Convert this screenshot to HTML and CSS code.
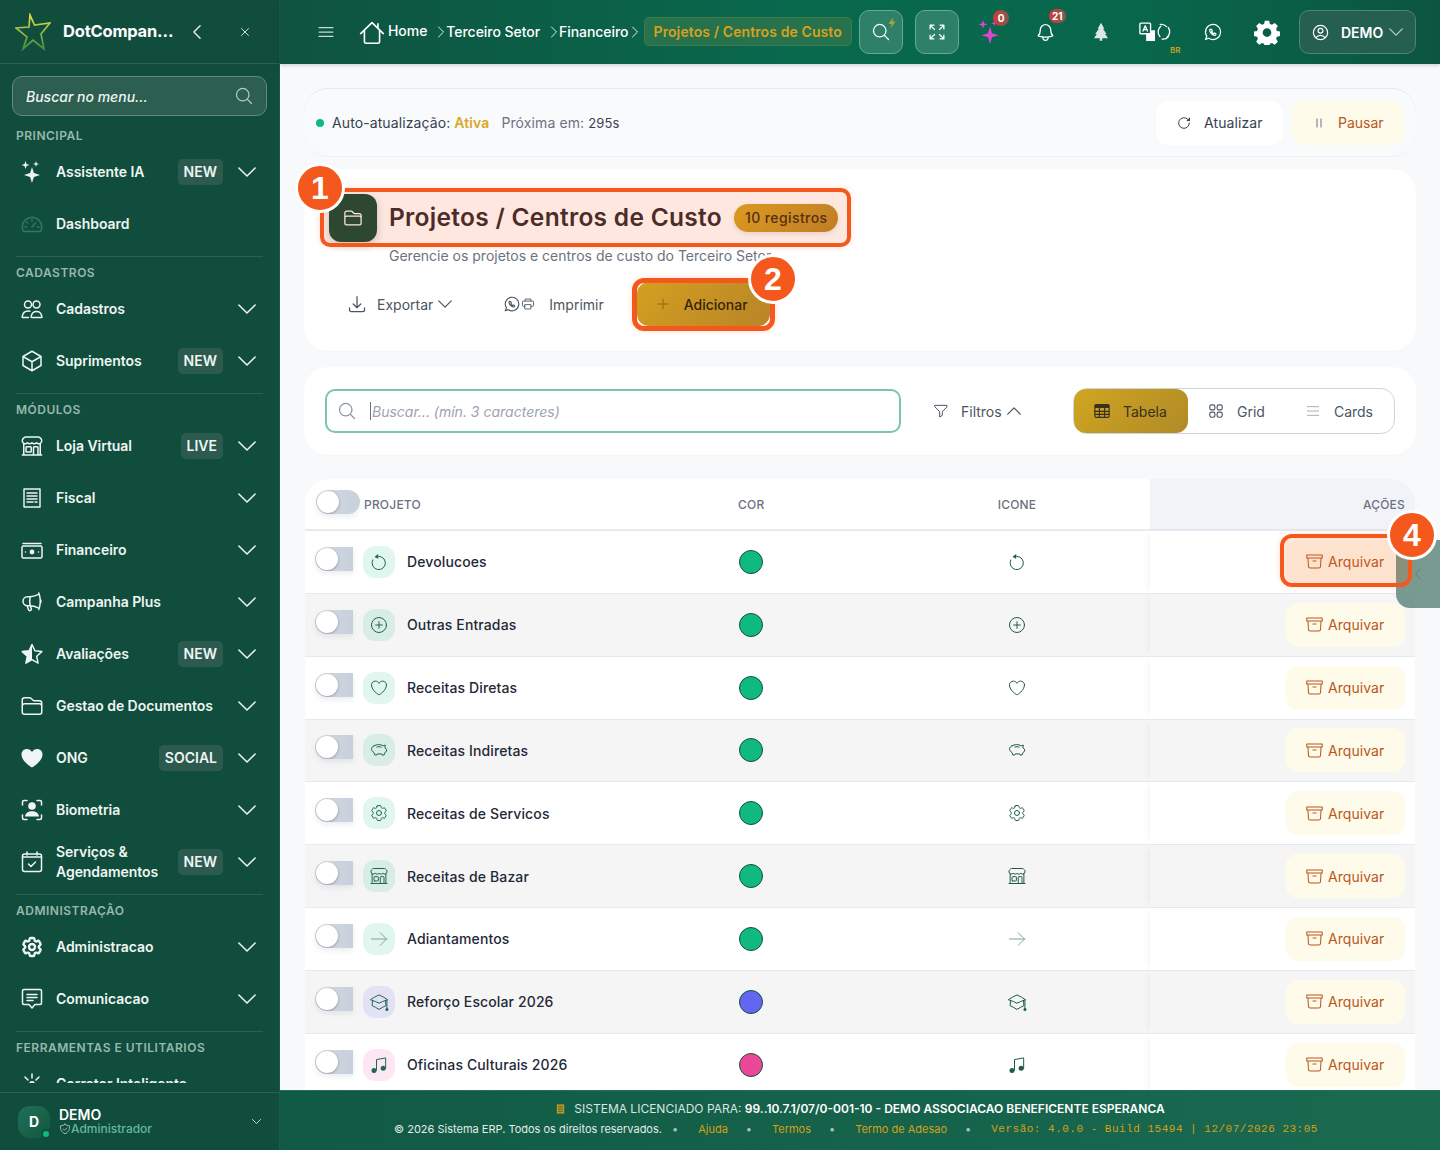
FILE: index.html
```html
<!DOCTYPE html>
<html lang="pt-BR">
<head>
<meta charset="UTF-8">
<meta name="viewport" content="width=device-width, initial-scale=1.0">
<title>Projetos / Centros de Custo</title>
<link rel="stylesheet" href="styles.css">
</head>
<body>

<!-- icon sprite -->
<svg class="sprite" xmlns="http://www.w3.org/2000/svg">
    <defs>
        <linearGradient id="star-grad" x1="0" y1="0" x2="0" y2="1">
            <stop offset="0" stop-color="#e9df4a"/>
            <stop offset="1" stop-color="#3f8f3c"/>
        </linearGradient>
    </defs>
    <symbol id="i-chev-down" viewBox="0 0 24 24"><path d="M19.5 8.25l-7.5 7.5-7.5-7.5"/></symbol>
    <symbol id="i-chev-up" viewBox="0 0 24 24"><path d="M4.5 15.75l7.5-7.5 7.5 7.5"/></symbol>
    <symbol id="i-chev-left" viewBox="0 0 24 24"><path d="M15.75 19.5L8.25 12l7.5-7.5"/></symbol>
    <symbol id="i-chev-right" viewBox="0 0 24 24"><path d="M8.25 4.5l7.5 7.5-7.5 7.5"/></symbol>
    <symbol id="i-x" viewBox="0 0 24 24"><path d="M6 18L18 6M6 6l12 12"/></symbol>
    <symbol id="i-search" viewBox="0 0 24 24"><path d="M21 21l-5.197-5.197m0 0A7.5 7.5 0 105.196 5.196a7.5 7.5 0 0010.607 10.607z"/></symbol>
    <symbol id="i-sparkles" viewBox="0 0 24 24"><path class="solid" d="M12 7l1.900 6.100L20 15l-6.100 1.900L12 23l-1.900-6.100L4 15l6.100-1.900z"/><path class="solid" d="M5.500 1l1 3 3 1-3 1-1 3-1-3-3-1 3-1z"/><path class="solid" d="M16 1l.7 2.300L19 4l-2.300.7L16 7l-.7-2.300L13 4l2.300-.7z"/></symbol>
    <symbol id="i-gauge" viewBox="0 0 24 24"><path d="M3.500 19.500h17c.8-1.500 1.200-3 1.200-4.500A9.700 9.700 0 002.300 15c0 1.500.4 3 1.200 4.500z"/><path d="M12 15l3.500-4M12 7.500v1.500M6.500 10l1 1M5 15h1.500M17.500 15H19"/></symbol>
    <symbol id="i-users" viewBox="0 0 24 24"><circle cx="8" cy="7.500" r="3.500"/><circle cx="16.500" cy="7.500" r="3.500"/><path d="M12.500 20.500h8.700c.5 0 .8-.4.7-.9-.6-3.300-2.700-5.100-5.400-5.100s-4.800 1.800-5.400 5.100c-.1.500.3.900.9.900z"/><path d="M9.800 14.200c-.6-.2-1.200-.3-1.800-.3-2.800 0-5.200 2-5.800 5.600-.1.500.3 1 .8 1h5.500"/></symbol>
    <symbol id="i-cube" viewBox="0 0 24 24"><path d="M21 7.500l-9-5.250L3 7.500m18 0l-9 5.250m9-5.250v9l-9 5.250M3 7.500l9 5.250M3 7.500v9l9 5.250m0-9v9"/></symbol>
    <symbol id="i-store" viewBox="0 0 24 24"><path d="M13.500 21v-7.500a.75.75 0 01.75-.75h3a.75.75 0 01.75.75V21m-4.500 0H2.360m11.140 0H18m0 0h3.640m-1.390 0V9.349m-16.500 11.650V9.350m0 0a3.001 3.001 0 003.750-.615A2.993 2.993 0 009.750 9.750c.896 0 1.700-.393 2.250-1.016a2.993 2.993 0 002.250 1.016c.896 0 1.700-.393 2.250-1.016a3.001 3.001 0 003.750.614m-16.500 0a3.004 3.004 0 01-.621-4.720L4.318 3.440A1.500 1.500 0 015.378 3h13.243a1.500 1.500 0 011.060.440l1.190 1.189a3 3 0 01-.621 4.720m-13.500 8.650h3.750a.75.75 0 00.750-.750V13.500a.75.75 0 00-.750-.750H6.750a.75.75 0 00-.750.750v3.750c0 .415.336.750.750.750z"/></symbol>
    <symbol id="i-receipt" viewBox="0 0 24 24"><path d="M4 3h16v18H4z" stroke-dasharray="1.500 .7"/><path d="M7 7h10M7 10h10M7 13h10M7 16h6M15 16h2"/></symbol>
    <symbol id="i-cash" viewBox="0 0 24 24"><path d="M3 5.500h18"/><rect x="2" y="8" width="20" height="12" rx="1.500"/><circle class="solid" cx="12" cy="14" r="2.400"/><path d="M5.500 14h.01M18.500 14h.01"/></symbol>
    <symbol id="i-mega" viewBox="0 0 24 24"><path d="M10.340 15.840c-.688-.060-1.386-.090-2.090-.090H7.500a4.500 4.500 0 110-9h.750c.704 0 1.402-.030 2.090-.090m0 9.180c.253.962.584 1.892.985 2.783.247.550.060 1.210-.463 1.511l-.657.380c-.551.318-1.260.117-1.527-.461a20.845 20.845 0 01-1.440-4.282m3.102.069a18.030 18.030 0 01-.590-4.590c0-1.586.205-3.124.590-4.590m0 9.180a23.848 23.848 0 018.835 2.535M10.340 6.660a23.847 23.847 0 008.835-2.535m0 0A23.740 23.740 0 0018.795 3m.380 1.125a23.910 23.910 0 011.014 5.395m-1.014 8.855c-.118.380-.245.754-.380 1.125m.380-1.125a23.910 23.910 0 001.014-5.395m0-3.460c.495.413.811 1.035.811 1.730 0 .695-.316 1.317-.811 1.730m0-3.460a24.347 24.347 0 010 3.460"/></symbol>
    <symbol id="i-star" viewBox="0 0 24 24"><path d="M12 2.500l2.900 6.300 6.900.8-5.100 4.700 1.400 6.800L12 17.700l-6.100 3.400 1.400-6.800-5.100-4.700 6.900-.8z"/><path class="solid" d="M12 2.500v15.200l-6.100 3.400 1.400-6.800-5.100-4.700 6.900-.8z"/></symbol>
    <symbol id="i-folder" viewBox="0 0 24 24"><path d="M2.250 12.750V12A2.250 2.250 0 014.500 9.750h15A2.250 2.250 0 0121.750 12v.75m-8.690-6.440l-2.120-2.120a1.500 1.500 0 00-1.061-.440H4.500A2.250 2.250 0 002.250 6v12a2.250 2.250 0 002.250 2.250h15A2.250 2.250 0 0021.750 18V9a2.250 2.250 0 00-2.250-2.250h-5.379a1.500 1.500 0 01-1.060-.440z"/></symbol>
    <symbol id="i-heart-solid" viewBox="0 0 24 24"><path class="solid" d="M12 21.500S1.500 15.500 1.500 8.500C1.500 5.200 4 3 6.900 3c2.100 0 4 1.100 5.100 3 1.100-1.900 3-3 5.100-3 2.900 0 5.400 2.200 5.400 5.500 0 7-10.500 13-10.500 13z"/></symbol>
    <symbol id="i-face" viewBox="0 0 24 24"><path d="M2.500 7V4a1.500 1.500 0 011.500-1.500h3M17 2.500h3A1.500 1.500 0 0121.500 4v3M2.500 17v3A1.500 1.500 0 004 21.500h3M21.500 17v3a1.500 1.500 0 01-1.500 1.500h-3"/><circle class="solid" cx="12" cy="8" r="3.800"/><path class="solid" d="M5 18.500c.4-3.500 3.300-5.300 7-5.300s6.600 1.800 7 5.300z"/></symbol>
    <symbol id="i-calendar" viewBox="0 0 24 24"><rect x="2.500" y="4" width="19" height="17.500" rx="2"/><path d="M7 2v3M17 2v3M2.500 7h19M8.500 14l2.500 2.500 4.500-4.500"/></symbol>
    <symbol id="i-cog" viewBox="0 0 24 24"><path d="M9.594 3.940c.090-.542.560-.940 1.110-.940h2.593c.550 0 1.020.398 1.110.940l.213 1.281c.063.374.313.686.645.870.074.040.147.083.220.127.324.196.720.257 1.075.124l1.217-.456a1.125 1.125 0 011.370.490l1.296 2.247a1.125 1.125 0 01-.260 1.431l-1.003.827c-.293.240-.438.613-.431.992a6.759 6.759 0 010 .255c-.007.378.138.750.430.990l1.005.828c.424.350.534.954.260 1.430l-1.298 2.247a1.125 1.125 0 01-1.369.491l-1.217-.456c-.355-.133-.750-.072-1.076.124a6.570 6.570 0 01-.220.128c-.331.183-.581.495-.644.869l-.213 1.280c-.090.543-.560.941-1.110.941h-2.594c-.550 0-1.020-.398-1.110-.940l-.213-1.281c-.062-.374-.312-.686-.644-.870a6.520 6.520 0 01-.220-.127c-.325-.196-.720-.257-1.076-.124l-1.217.456a1.125 1.125 0 01-1.369-.490l-1.297-2.247a1.125 1.125 0 01.260-1.431l1.004-.827c.292-.240.437-.613.430-.992a6.932 6.932 0 010-.255c.007-.378-.138-.750-.430-.990l-1.004-.828a1.125 1.125 0 01-.260-1.430l1.297-2.247a1.125 1.125 0 011.370-.491l1.216.456c.356.133.751.072 1.076-.124.072-.044.146-.087.220-.128.332-.183.582-.495.644-.869l.214-1.281z"/><path d="M15 12a3 3 0 11-6 0 3 3 0 016 0z"/></symbol>
    <symbol id="i-cog-bold" viewBox="0 0 24 24"><path class="solid" fill-rule="evenodd" d="M10 1.500h4l.7 3 1.900.8 2.600-1.600 2.800 2.800-1.600 2.600.8 1.900 3 .7v4l-3 .7-.8 1.900 1.600 2.600-2.800 2.800-2.600-1.600-1.900.8-.7 3h-4l-.7-3-1.900-.8-2.600 1.600-2.800-2.800 1.600-2.600-.8-1.900-3-.7v-4l3-.7.8-1.900-1.600-2.600 2.800-2.800 2.600 1.600 1.900-.8zM12 8.500a4 4 0 100 8 4 4 0 000-8z"/></symbol>
    <symbol id="i-chat" viewBox="0 0 24 24"><path d="M4 2.500h16A1.500 1.500 0 0121.500 4v12a1.500 1.500 0 01-1.500 1.500h-5L12 21l-3-3.500H4A1.500 1.500 0 012.500 16V4A1.500 1.500 0 014 2.500z"/><path d="M7 7.500h10M7 10.500h10M7 13.500h6"/></symbol>
    <symbol id="i-sun" viewBox="0 0 24 24"><circle class="solid" cx="12" cy="12" r="3"/><path d="M12 2v4M12 18v4M2 12h4M18 12h4M5 5l3 3M16 16l3 3M5 19l3-3M16 8l3-3"/></symbol>
    <symbol id="i-shield" viewBox="0 0 24 24"><path d="M12 2.500c2.500 2 5.500 3 9 3 .8 7.500-2 13-9 16-7-3-9.800-8.500-9-16 3.500 0 6.500-1 9-3z"/><path d="M8.500 12l2.500 2.500 4.500-4.500"/></symbol>
    <symbol id="i-menu" viewBox="0 0 24 24"><path d="M3.750 6.750h16.500M3.750 12h16.500m-16.500 5.250h16.500"/></symbol>
    <symbol id="i-home" viewBox="0 0 24 24"><path d="M1.500 12.500L12 2.500l10.500 10M5 9.500V20a1.500 1.500 0 001.500 1.500h11A1.500 1.500 0 0019 20V9.500M17.500 3.500v4"/></symbol>
    <symbol id="i-expand" viewBox="0 0 24 24"><path d="M3.750 8.250v-4.500h4.500M3.750 3.750L9 9M20.250 8.250v-4.500h-4.500M20.250 3.750L15 9M3.750 15.750v4.500h4.500M3.750 20.250L9 15M20.250 15.750v4.500h-4.500M20.250 20.250L15 15"/></symbol>
    <symbol id="i-bolt" viewBox="0 0 24 24"><path class="solid" d="M14 1L5 14h6l-2 9 10-14h-6z"/></symbol>
    <symbol id="i-bell" viewBox="0 0 24 24"><path d="M14.857 17.082a23.848 23.848 0 005.454-1.310A8.967 8.967 0 0118 9.750V9A6 6 0 006 9v.750a8.967 8.967 0 01-2.312 6.022c1.733.640 3.560 1.085 5.455 1.310m5.714 0a24.255 24.255 0 01-5.714 0m5.714 0a3 3 0 11-5.714 0"/></symbol>
    <symbol id="i-tree" viewBox="0 0 24 24"><path class="solid" d="M12 1l4 7h-1.500l4 6.500H17l3.500 5H3.500l3.500-5H5L9.500 8H8z"/><rect class="solid" x="10.500" y="19" width="3" height="3.500"/></symbol>
    <symbol id="i-translate" viewBox="0 0 36 24"><rect x="1" y="2" width="12" height="12" rx="1"/><path d="M4.500 11l2.500-6 2.500 6M5.300 9.300h3.400"/><path class="solid" d="M8 14h5v-4h5v12H8z"/><path d="M31 6a8 8 0 00-7-2.500M26 20a8 8 0 007-2.500"/><path d="M24.500 5.500a8 8 0 00-1 11.500M31.500 18a8 8 0 001.500-11"/></symbol>
    <symbol id="i-whatsapp" viewBox="0 0 24 24"><path d="M3 21l1.650-3.800A9 9 0 117 19.500z"/><path d="M9 8.500c-.500 0-1 .6-1 1.500 0 2.500 3.500 6 6 6 .9 0 1.500-.5 1.500-1l-.2-1-1.600-.8-.9.900c-1-.4-2-1.400-2.400-2.400l.9-.9-.8-1.600z"/></symbol>
    <symbol id="i-user" viewBox="0 0 24 24"><path d="M17.982 18.725A7.488 7.488 0 0012 15.750a7.488 7.488 0 00-5.982 2.975m11.963 0a9 9 0 10-11.963 0m11.963 0A8.966 8.966 0 0112 21a8.966 8.966 0 01-5.982-2.275M15 9.750a3 3 0 11-6 0 3 3 0 016 0z"/></symbol>
    <symbol id="i-refresh" viewBox="0 0 24 24"><path d="M20 12a8 8 0 11-2.500-5.800"/><path class="solid" d="M21 3.500V9h-5.500z"/></symbol>
    <symbol id="i-pause" viewBox="0 0 24 24"><path d="M9 6v12M15 6v12"/></symbol>
    <symbol id="i-download" viewBox="0 0 24 24"><path d="M3 16.500v2.250A2.250 2.250 0 005.250 21h13.500A2.250 2.250 0 0021 18.750V16.500M16.500 12L12 16.500m0 0L7.500 12m4.500 4.500V3"/></symbol>
    <symbol id="i-print" viewBox="0 0 24 24"><path d="M7 7V3.500h10V7M7 16H4a1.500 1.500 0 01-1.500-1.500v-6A1.500 1.500 0 014 7h16a1.500 1.500 0 011.500 1.500v6A1.500 1.500 0 0120 16h-3"/><rect x="7" y="13" width="10" height="7.500"/></symbol>
    <symbol id="i-plus" viewBox="0 0 24 24"><path d="M12 4.500v15m7.500-7.500h-15"/></symbol>
    <symbol id="i-funnel" viewBox="0 0 24 24"><path d="M3 3.500h18v2.300l-7 7.200v5.500L10 21v-8L3 5.800z"/></symbol>
    <symbol id="i-table" viewBox="0 0 24 24"><rect x="2.500" y="3.500" width="19" height="17" rx="1.500"/><path class="solid" d="M2.500 5A1.500 1.500 0 014 3.500h16A1.500 1.500 0 0121.500 5v3h-19z"/><path d="M2.500 12.500h19M2.500 16.500h19M8.500 8v12.500M15.500 8v12.500"/></symbol>
    <symbol id="i-grid" viewBox="0 0 24 24"><path d="M3.750 6A2.250 2.250 0 016 3.750h2.250A2.250 2.250 0 0110.500 6v2.250a2.250 2.250 0 01-2.250 2.250H6a2.250 2.250 0 01-2.250-2.250V6zM3.750 15.750A2.250 2.250 0 016 13.500h2.250a2.250 2.250 0 012.250 2.250V18a2.250 2.250 0 01-2.250 2.250H6A2.250 2.250 0 013.750 18v-2.250zM13.500 6a2.250 2.250 0 012.250-2.250H18A2.250 2.250 0 0120.250 6v2.250A2.250 2.250 0 0118 10.500h-2.250a2.250 2.250 0 01-2.250-2.250V6zM13.500 15.750a2.250 2.250 0 012.250-2.250H18a2.250 2.250 0 012.250 2.250V18A2.250 2.250 0 0118 20.250h-2.250a2.250 2.250 0 01-2.250-2.250v-2.250z"/></symbol>
    <symbol id="i-rows" viewBox="0 0 24 24"><path d="M3.500 5.500h17M3.500 12h17M3.500 18.500h17"/></symbol>
    <symbol id="i-archive" viewBox="0 0 24 24"><path d="M20.250 7.500l-.625 10.632a2.250 2.250 0 01-2.247 2.118H6.622a2.250 2.250 0 01-2.247-2.118L3.750 7.500M10 11.250h4M2.250 3.750h19.500V7.500H2.250z"/></symbol>
    <symbol id="i-undo" viewBox="0 0 24 24"><path d="M8 6a8 8 0 11-3.500 3.500"/><path class="solid" d="M11 2.500v6L7 5.500z"/></symbol>
    <symbol id="i-plus-circle" viewBox="0 0 24 24"><path d="M12 8v8m4-4H8m13 0a9 9 0 11-18 0 9 9 0 0118 0z"/></symbol>
    <symbol id="i-heart" viewBox="0 0 24 24"><path d="M21 8.250c0-2.485-2.099-4.500-4.688-4.500-1.935 0-3.597 1.126-4.312 2.733-.715-1.607-2.377-2.733-4.313-2.733C5.100 3.750 3 5.765 3 8.250c0 7.220 9 12 9 12s9-4.780 9-12z"/></symbol>
    <symbol id="i-piggy" viewBox="0 0 24 24"><path d="M6 7c3-1.800 8-2.200 11 0l2.500-1-.4 3.500 2 1.500v2.500l-2 1.500-1 3h-2.500l-.5-1.300H9.900l-.5 1.300H7l-1-3c-1.800-1-3-2.700-3-4.500C3 9 4.300 8 6 7z"/><path d="M9.500 8.500c1.800-.6 3.400-.6 5 0"/></symbol>
    <symbol id="i-arrow" viewBox="0 0 24 24"><path d="M13.500 4.500L21 12m0 0l-7.500 7.500M21 12H3"/></symbol>
    <symbol id="i-cap" viewBox="0 0 24 24"><path d="M4.260 10.147a60.436 60.436 0 00-.491 6.347A48.627 48.627 0 0112 20.904a48.627 48.627 0 018.232-4.410 60.460 60.460 0 00-.491-6.347m-15.482 0a50.570 50.570 0 00-2.658-.813A59.905 59.905 0 0112 3.493a59.902 59.902 0 0110.399 5.840c-.896.248-1.783.520-2.658.814m-15.482 0A50.697 50.697 0 0112 13.489a50.702 50.702 0 017.740-3.342M21.500 10v10"/><circle class="solid" cx="21.500" cy="21" r="1.800"/></symbol>
    <symbol id="i-music" viewBox="0 0 24 24"><path d="M9 18V5.500l11-2V16"/><circle class="solid" cx="6" cy="18.500" r="3"/><circle class="solid" cx="17" cy="16" r="3"/></symbol>
    <symbol id="i-building" viewBox="0 0 24 24"><path class="solid" d="M4 2h16v20H4z"/><path class="bld-win" d="M7 6h10M7 10h10M7 14h10M7 18h10"/></symbol>
</svg>

<div class="app">

    <!-- Sidebar -->
    <aside class="sidebar">
        <div class="side-top">
            <svg class="logo" viewBox="0 0 36 38"><path fill="none" stroke="url(#star-grad)" stroke-width="1.700" d="M15 2l4.500 10L35 10l-9 11 3 15-11-9L8 36l4-12L1 15l13-1z"/></svg>
            <span class="brand">DotCompan…</span>
            <svg class="ico side-back"><use href="#i-chev-left"/></svg>
            <svg class="ico side-close"><use href="#i-x"/></svg>
        </div>

        <div class="side-search">
            <span>Buscar no menu...</span>
            <svg class="ico"><use href="#i-search"/></svg>
        </div>

        <nav class="side-nav">
            <div class="nav-group">
                <div class="nav-label">PRINCIPAL</div>
                <a class="nav-item"><svg class="ico"><use href="#i-sparkles"/></svg><span class="nav-text">Assistente IA</span><span class="tag">NEW</span><svg class="ico nav-chev"><use href="#i-chev-down"/></svg></a>
                <a class="nav-item"><svg class="ico ico-dim"><use href="#i-gauge"/></svg><span class="nav-text">Dashboard</span></a>
            </div>
            <div class="nav-group">
                <div class="nav-label">CADASTROS</div>
                <a class="nav-item"><svg class="ico"><use href="#i-users"/></svg><span class="nav-text">Cadastros</span><svg class="ico nav-chev"><use href="#i-chev-down"/></svg></a>
                <a class="nav-item"><svg class="ico"><use href="#i-cube"/></svg><span class="nav-text">Suprimentos</span><span class="tag">NEW</span><svg class="ico nav-chev"><use href="#i-chev-down"/></svg></a>
            </div>
            <div class="nav-group">
                <div class="nav-label">MÓDULOS</div>
                <a class="nav-item"><svg class="ico"><use href="#i-store"/></svg><span class="nav-text">Loja Virtual</span><span class="tag">LIVE</span><svg class="ico nav-chev"><use href="#i-chev-down"/></svg></a>
                <a class="nav-item"><svg class="ico"><use href="#i-receipt"/></svg><span class="nav-text">Fiscal</span><svg class="ico nav-chev"><use href="#i-chev-down"/></svg></a>
                <a class="nav-item"><svg class="ico"><use href="#i-cash"/></svg><span class="nav-text">Financeiro</span><svg class="ico nav-chev"><use href="#i-chev-down"/></svg></a>
                <a class="nav-item"><svg class="ico"><use href="#i-mega"/></svg><span class="nav-text">Campanha Plus</span><svg class="ico nav-chev"><use href="#i-chev-down"/></svg></a>
                <a class="nav-item"><svg class="ico"><use href="#i-star"/></svg><span class="nav-text">Avaliações</span><span class="tag">NEW</span><svg class="ico nav-chev"><use href="#i-chev-down"/></svg></a>
                <a class="nav-item"><svg class="ico"><use href="#i-folder"/></svg><span class="nav-text">Gestao de Documentos</span><svg class="ico nav-chev"><use href="#i-chev-down"/></svg></a>
                <a class="nav-item"><svg class="ico"><use href="#i-heart-solid"/></svg><span class="nav-text">ONG</span><span class="tag">SOCIAL</span><svg class="ico nav-chev"><use href="#i-chev-down"/></svg></a>
                <a class="nav-item"><svg class="ico"><use href="#i-face"/></svg><span class="nav-text">Biometria</span><svg class="ico nav-chev"><use href="#i-chev-down"/></svg></a>
                <a class="nav-item"><svg class="ico"><use href="#i-calendar"/></svg><span class="nav-text">Serviços &amp; Agendamentos</span><span class="tag">NEW</span><svg class="ico nav-chev"><use href="#i-chev-down"/></svg></a>
            </div>
            <div class="nav-group">
                <div class="nav-label">ADMINISTRAÇÃO</div>
                <a class="nav-item"><svg class="ico nav-gear"><use href="#i-cog"/></svg><span class="nav-text">Administracao</span><svg class="ico nav-chev"><use href="#i-chev-down"/></svg></a>
                <a class="nav-item"><svg class="ico"><use href="#i-chat"/></svg><span class="nav-text">Comunicacao</span><svg class="ico nav-chev"><use href="#i-chev-down"/></svg></a>
            </div>
            <div class="nav-group">
                <div class="nav-label">FERRAMENTAS E UTILITARIOS</div>
                <a class="nav-item"><svg class="ico"><use href="#i-sun"/></svg><span class="nav-text">Corretor Inteligente</span></a>
            </div>
        </nav>

        <div class="side-user">
            <div class="avatar">D<span class="avatar-dot"></span></div>
            <div class="user-info">
                <div class="user-name">DEMO</div>
                <div class="user-role"><svg class="ico"><use href="#i-shield"/></svg>Administrador</div>
            </div>
            <svg class="ico user-chev"><use href="#i-chev-down"/></svg>
        </div>
    </aside>

    <!-- Main column -->
    <div class="main">
        <header class="topbar">
            <svg class="ico top-menu"><use href="#i-menu"/></svg>
            <div class="crumbs">
                <svg class="ico crumb-home"><use href="#i-home"/></svg>
                <span class="crumb crumb-first">Home</span>
                <svg class="ico crumb-sep"><use href="#i-chev-right"/></svg>
                <span class="crumb">Terceiro Setor</span>
                <svg class="ico crumb-sep"><use href="#i-chev-right"/></svg>
                <span class="crumb">Financeiro</span>
                <svg class="ico crumb-sep crumb-sep-last"><use href="#i-chev-right"/></svg>
                <span class="crumb-now">Projetos / Centros de Custo</span>
            </div>
            <div class="tools">
                <div class="tool-box tool-search">
                    <svg class="ico"><use href="#i-search"/></svg>
                    <svg class="ico tool-bolt"><use href="#i-bolt"/></svg>
                </div>
                <div class="tool-box tool-expand"><svg class="ico"><use href="#i-expand"/></svg></div>
                <div class="tool tool-ai">
                    <svg class="ico"><use href="#i-sparkles"/></svg>
                    <span class="count count-ai">0</span>
                </div>
                <div class="tool tool-bell">
                    <svg class="ico"><use href="#i-bell"/></svg>
                    <span class="count count-bell">21</span>
                </div>
                <div class="tool tool-tree"><svg class="ico"><use href="#i-tree"/></svg></div>
                <div class="tool tool-lang">
                    <svg class="ico"><use href="#i-translate"/></svg>
                    <span class="lang-code">BR</span>
                </div>
                <div class="tool tool-wa"><svg class="ico"><use href="#i-whatsapp"/></svg></div>
                <div class="tool tool-gear"><svg class="ico"><use href="#i-cog-bold"/></svg></div>
                <div class="tool-user">
                    <svg class="ico"><use href="#i-user"/></svg>
                    <span>DEMO</span>
                    <svg class="ico tool-user-chev"><use href="#i-chev-down"/></svg>
                </div>
            </div>
        </header>

        <main class="content">

            <div class="refresh-card">
                <div class="refresh-status">
                    <span class="status-dot"></span>
                    <span>Auto-atualização: <b class="status-on">Ativa</b></span>
                    <span class="status-next">Próxima em: <b>295s</b></span>
                </div>
                <div class="refresh-actions">
                    <button class="btn btn-white"><svg class="ico"><use href="#i-refresh"/></svg>Atualizar</button>
                    <button class="btn btn-warn btn-pause"><svg class="ico"><use href="#i-pause"/></svg>Pausar</button>
                </div>
            </div>

            <section class="title-card">
                <div class="title-row">
                    <div class="title-icon"><svg class="ico"><use href="#i-folder"/></svg></div>
                    <h1>Projetos / Centros de Custo</h1>
                    <span class="title-count">10 registros</span>
                </div>
                <p class="title-sub">Gerencie os projetos e centros de custo do Terceiro Setor</p>
                <div class="title-actions">
                    <button class="btn btn-plain btn-export"><svg class="ico"><use href="#i-download"/></svg>Exportar<svg class="ico btn-chev"><use href="#i-chev-down"/></svg></button>
                    <button class="btn btn-plain btn-print"><span class="print-icons"><svg class="ico"><use href="#i-whatsapp"/></svg><svg class="ico"><use href="#i-print"/></svg></span>Imprimir</button>
                    <button class="btn btn-gold btn-add"><svg class="ico"><use href="#i-plus"/></svg>Adicionar</button>
                </div>
            </section>

            <section class="filter-card">
                <div class="search-box">
                    <svg class="ico"><use href="#i-search"/></svg>
                    <span class="caret"></span>
                    <span>Buscar... (mín. 3 caracteres)</span>
                </div>
                <button class="btn btn-plain btn-filter"><svg class="ico"><use href="#i-funnel"/></svg>Filtros<svg class="ico btn-chev"><use href="#i-chev-up"/></svg></button>
                <div class="views">
                    <span class="view view-on"><svg class="ico"><use href="#i-table"/></svg>Tabela</span>
                    <span class="view view-grid"><svg class="ico"><use href="#i-grid"/></svg>Grid</span>
                    <span class="view view-cards"><svg class="ico"><use href="#i-rows"/></svg>Cards</span>
                </div>
            </section>

            <section class="grid-table">
                <div class="t-row t-head">
                    <div class="t-cell t-name"><span class="toggle toggle-head"><i></i></span>PROJETO</div>
                    <div class="t-cell t-color">COR</div>
                    <div class="t-cell t-icon">ICONE</div>
                    <div class="t-cell t-actions">AÇÕES</div>
                </div>

                <div class="t-row">
                    <div class="t-cell t-name"><span class="toggle"><i></i></span><span class="chip"><svg class="ico"><use href="#i-undo"/></svg></span>Devolucoes</div>
                    <div class="t-cell t-color"><span class="dot dot-green"></span></div>
                    <div class="t-cell t-icon"><svg class="ico"><use href="#i-undo"/></svg></div>
                    <div class="t-cell t-actions"><button class="btn btn-warn btn-archive"><svg class="ico"><use href="#i-archive"/></svg>Arquivar</button></div>
                </div>
                <div class="t-row">
                    <div class="t-cell t-name"><span class="toggle"><i></i></span><span class="chip"><svg class="ico"><use href="#i-plus-circle"/></svg></span>Outras Entradas</div>
                    <div class="t-cell t-color"><span class="dot dot-green"></span></div>
                    <div class="t-cell t-icon"><svg class="ico"><use href="#i-plus-circle"/></svg></div>
                    <div class="t-cell t-actions"><button class="btn btn-warn btn-archive"><svg class="ico"><use href="#i-archive"/></svg>Arquivar</button></div>
                </div>
                <div class="t-row">
                    <div class="t-cell t-name"><span class="toggle"><i></i></span><span class="chip"><svg class="ico"><use href="#i-heart"/></svg></span>Receitas Diretas</div>
                    <div class="t-cell t-color"><span class="dot dot-green"></span></div>
                    <div class="t-cell t-icon"><svg class="ico"><use href="#i-heart"/></svg></div>
                    <div class="t-cell t-actions"><button class="btn btn-warn btn-archive"><svg class="ico"><use href="#i-archive"/></svg>Arquivar</button></div>
                </div>
                <div class="t-row">
                    <div class="t-cell t-name"><span class="toggle"><i></i></span><span class="chip"><svg class="ico"><use href="#i-piggy"/></svg></span>Receitas Indiretas</div>
                    <div class="t-cell t-color"><span class="dot dot-green"></span></div>
                    <div class="t-cell t-icon"><svg class="ico"><use href="#i-piggy"/></svg></div>
                    <div class="t-cell t-actions"><button class="btn btn-warn btn-archive"><svg class="ico"><use href="#i-archive"/></svg>Arquivar</button></div>
                </div>
                <div class="t-row">
                    <div class="t-cell t-name"><span class="toggle"><i></i></span><span class="chip"><svg class="ico"><use href="#i-cog"/></svg></span>Receitas de Servicos</div>
                    <div class="t-cell t-color"><span class="dot dot-green"></span></div>
                    <div class="t-cell t-icon"><svg class="ico"><use href="#i-cog"/></svg></div>
                    <div class="t-cell t-actions"><button class="btn btn-warn btn-archive"><svg class="ico"><use href="#i-archive"/></svg>Arquivar</button></div>
                </div>
                <div class="t-row">
                    <div class="t-cell t-name"><span class="toggle"><i></i></span><span class="chip"><svg class="ico"><use href="#i-store"/></svg></span>Receitas de Bazar</div>
                    <div class="t-cell t-color"><span class="dot dot-green"></span></div>
                    <div class="t-cell t-icon"><svg class="ico"><use href="#i-store"/></svg></div>
                    <div class="t-cell t-actions"><button class="btn btn-warn btn-archive"><svg class="ico"><use href="#i-archive"/></svg>Arquivar</button></div>
                </div>
                <div class="t-row">
                    <div class="t-cell t-name"><span class="toggle"><i></i></span><span class="chip chip-soft"><svg class="ico"><use href="#i-arrow"/></svg></span>Adiantamentos</div>
                    <div class="t-cell t-color"><span class="dot dot-green"></span></div>
                    <div class="t-cell t-icon t-icon-soft"><svg class="ico"><use href="#i-arrow"/></svg></div>
                    <div class="t-cell t-actions"><button class="btn btn-warn btn-archive"><svg class="ico"><use href="#i-archive"/></svg>Arquivar</button></div>
                </div>
                <div class="t-row">
                    <div class="t-cell t-name"><span class="toggle"><i></i></span><span class="chip chip-indigo"><svg class="ico"><use href="#i-cap"/></svg></span>Reforço Escolar 2026</div>
                    <div class="t-cell t-color"><span class="dot dot-indigo"></span></div>
                    <div class="t-cell t-icon"><svg class="ico"><use href="#i-cap"/></svg></div>
                    <div class="t-cell t-actions"><button class="btn btn-warn btn-archive"><svg class="ico"><use href="#i-archive"/></svg>Arquivar</button></div>
                </div>
                <div class="t-row">
                    <div class="t-cell t-name"><span class="toggle"><i></i></span><span class="chip chip-pink"><svg class="ico"><use href="#i-music"/></svg></span>Oficinas Culturais 2026</div>
                    <div class="t-cell t-color"><span class="dot dot-pink"></span></div>
                    <div class="t-cell t-icon"><svg class="ico"><use href="#i-music"/></svg></div>
                    <div class="t-cell t-actions"><button class="btn btn-warn btn-archive"><svg class="ico"><use href="#i-archive"/></svg>Arquivar</button></div>
                </div>
            </section>
        </main>

        <footer class="footer">
            <div class="foot-line"><svg class="ico"><use href="#i-building"/></svg>SISTEMA LICENCIADO PARA: <b>99..10.7.1/07/0-001-10 - DEMO ASSOCIACAO BENEFICENTE ESPERANCA</b></div>
            <div class="foot-links">
                <span>© 2026 Sistema ERP. Todos os direitos reservados.</span>
                <i class="foot-dot-first">•</i><a>Ajuda</a>
                <i>•</i><a>Termos</a>
                <i>•</i><a>Termo de Adesao</a>
                <i>•</i><a class="foot-ver">Versão: 4.0.0 - Build 15494 | 12/07/2026 23:05</a>
            </div>
        </footer>
    </div>
</div>

<!-- Slide-out tab and tutorial annotations, on top of the page -->
<div class="side-tab"><svg class="ico"><use href="#i-chev-left"/></svg></div>
<div class="mark mark-1"></div>
<div class="mark mark-2"></div>
<div class="mark mark-4"></div>
<span class="pin pin-1">1</span>
<span class="pin pin-2">2</span>
<span class="pin pin-4">4</span>

</body>
</html>
```

FILE: styles.css
```css
* { box-sizing: border-box; }
html, body { margin: 0; height: 100%; }
body { position: relative; width: 1440px; height: 1150px; overflow: hidden; font-family: Inter, "Liberation Sans", sans-serif; font-size: 14px; color: #1f2937; background-color: #f8f9fb; }
a { color: inherit; text-decoration: none; }
button { font: inherit; border: 0; cursor: pointer; }

.sprite { position: absolute; width: 0; height: 0; }
.ico { display: block; width: 24px; height: 24px; flex-shrink: 0; fill: none; stroke: currentColor; stroke-width: 1.5; stroke-linecap: round; stroke-linejoin: round; }
.solid { fill: currentColor; stroke: none; }
.bld-win { stroke: #115a45; stroke-width: 1.6; }

.app { display: grid; grid-template-columns: 280px 1fr; height: 100%; }

/* Sidebar */
.sidebar { display: flex; flex-direction: column; height: 1150px; background-color: #114d3c; color: #eef5f2; border-right: 1px solid #1d5b49; }
.side-top { display: flex; align-items: center; height: 64px; padding-left: 15px; border-bottom: 1px solid #2a6252; flex-shrink: 0; }
.logo { width: 36px; height: 38px; flex-shrink: 0; }
.brand { width: 112px; margin: -1px 0 0 12px; font-size: 16.5px; font-weight: 700; color: #fff; white-space: nowrap; letter-spacing: -0.2px; }
.side-back { width: 20px; height: 20px; margin-left: 12px; }
.side-close { width: 14px; height: 14px; margin-left: 31px; }

.side-search { display: flex; align-items: center; justify-content: space-between; width: 255px; height: 40px; margin: 12px 0 4px 12px; padding: 0 12px 0 13px; background-color: #2c5f50; border: 1px solid #5f8a7d; border-radius: 10px; font-style: italic; font-weight: 500; flex-shrink: 0; }
.side-search .ico { width: 20px; height: 20px; color: #b7cbc4; }

.side-nav { flex: 1; min-height: 0; overflow: hidden; margin-bottom: 9px; }
.nav-group { margin: 0 16px; padding-bottom: 6px; border-bottom: 1px solid #2a6252; }
.nav-group:last-child { border-bottom: 0; }
.nav-label { padding: 8px 0 2px; font-size: 12px; line-height: 16px; font-weight: 600; letter-spacing: 0.5px; color: #98b8ad; }
.nav-item { display: flex; align-items: center; height: 52px; margin: 0 8px 0 -12px; padding-left: 16px; font-weight: 600; line-height: 20px; letter-spacing: -0.05px; }
.nav-item > .ico:first-child { margin-right: 12px; }
.ico-dim { color: #2f7a63; }
.nav-gear { stroke-width: 2.4; }
.nav-text { flex: 1; }
.tag { margin-right: 11px; padding: 0 6px; height: 26px; line-height: 26px; background-color: #2d5a4f; border-radius: 5px; letter-spacing: 0; }
.nav-chev { width: 26px; height: 26px; margin-right: -5px; stroke-width: 1.4; }

.side-user { display: flex; align-items: center; height: 58px; padding: 0 16px 0 18px; border-top: 1px solid #2a6252; flex-shrink: 0; }
.avatar { position: relative; display: flex; align-items: center; justify-content: center; width: 32px; height: 32px; background: linear-gradient(135deg, #1f6f57, #14573f); border-radius: 12px; color: #fff; font-weight: 700; }
.avatar-dot { position: absolute; right: -1px; bottom: -1px; width: 10px; height: 10px; background-color: #10b981; border: 2px solid #114d3c; border-radius: 50%; }
.user-info { flex: 1; margin-left: 9px; }
.user-name { font-weight: 600; line-height: 14px; color: #fff; }
.user-role { display: flex; align-items: center; font-size: 12px; line-height: 13px; font-weight: 500; color: #63b89c; }
.user-role .ico { width: 12px; height: 12px; color: #c8dcd5; }
.user-chev { width: 13px; height: 13px; }

/* Top bar */
.main { display: flex; flex-direction: column; min-width: 0; height: 1150px; }
.topbar { display: flex; align-items: center; height: 64px; padding: 0 24px 0 36px; background: linear-gradient(90deg, #0f5340, #08694d 45%, #08664b 75%, #0d5540); box-shadow: 0 1px 4px rgba(0, 0, 0, 0.2); color: #fff; flex-shrink: 0; position: relative; }
.top-menu { width: 20px; height: 20px; color: #c9dcd5; }
.crumbs { display: flex; align-items: center; margin: -1px 0 0 23px; font-weight: 500; }
.crumb-home { width: 26px; height: 26px; margin-top: 2px; }
.crumb { letter-spacing: -0.05px; }
.crumb-first { margin: -2px 0 0 3px; }
.crumb-sep { width: 16px; height: 16px; margin: 1px -3px 0 6px; color: #e4efeb; }
.crumb-sep-last { margin: 1px 1px 0 -2px; }
.crumb-now { padding: 0 9px; height: 29px; line-height: 27px; border: 1px solid #3f7a4f; border-radius: 5px; background-color: #26724c; color: #d9a11c; font-weight: 600; white-space: nowrap; letter-spacing: 0.1px; }

.tools { display: flex; align-items: center; margin-left: auto; }
.tool-box { position: relative; display: flex; align-items: center; justify-content: center; width: 44px; height: 44px; background-color: #2f8069; border: 1px solid #6aa896; border-radius: 10px; }
.tool-box .ico { width: 20px; height: 20px; }
.tool-expand { margin-left: 12px; }
.tool-bolt { position: absolute; top: 6px; right: 4px; width: 12px !important; height: 12px !important; color: #a9a13b; }
.tool { position: relative; display: flex; align-items: center; justify-content: center; height: 44px; }
.tool-ai { width: 34px; margin-left: 14px; color: #d946cf; }
.tool-ai .ico { width: 26px; height: 26px; }
.tool-bell { width: 56px; margin-left: 10px; }
.tool-bell .ico { width: 21px; height: 21px; }
.tool-tree { width: 36px; margin-left: 10px; color: #dbe8e3; }
.tool-tree .ico { width: 20px; height: 20px; }
.tool-lang { width: 52px; margin-left: 10px; }
.tool-lang .ico { width: 32px; height: 22px; stroke-width: 1.5; }
.tool-wa { width: 44px; margin-left: 10px; }
.tool-wa .ico { width: 20px; height: 20px; }
.tool-gear { width: 44px; margin-left: 10px; }
.tool-gear .ico { width: 26px; height: 26px; }
.count { position: absolute; display: flex; align-items: center; justify-content: center; min-width: 16px; height: 16px; padding: 0 3px; border-radius: 8px; background: linear-gradient(90deg, #d33a3a, #7f5a50); font-size: 10px; font-weight: 700; color: #fff; }
.count-ai { top: 0; right: -2px; }
.count-bell { top: -1px; left: 32px; height: 14px; }
.lang-code { position: absolute; left: 41px; bottom: -1px; font-size: 8px; font-weight: 600; color: #c9a21a; }
.tool-user { display: flex; align-items: center; width: 117px; height: 44px; margin-left: 10px; padding-left: 11px; background-color: #245f50; border: 1px solid #4f8576; border-radius: 10px; font-weight: 600; }
.tool-user .ico { width: 19px; height: 19px; }
.tool-user span { margin-left: 11px; }
.tool-user .tool-user-chev { width: 20px; height: 20px; margin-left: 3px; color: #b9d0c8; }

/* Page content */
.content { flex: 1; min-height: 0; overflow: hidden; padding: 24px 24px 0; }

.refresh-card { display: flex; align-items: center; justify-content: space-between; height: 69px; padding: 0 12px; border-top: 1px solid #e5e7eb; border-bottom: 1px solid #eff1f4; border-radius: 24px; background-color: #f9fafc; }
.refresh-status { display: flex; align-items: center; color: #374151; letter-spacing: 0.1px; }
.status-dot { width: 8px; height: 8px; margin-right: 8px; background-color: #10b981; border-radius: 50%; }
.status-on { color: #d9a82a; font-weight: 600; }
.status-next { margin-left: 12px; color: #6b7280; }
.status-next b { font-size: 13px; font-weight: 400; color: #374151; }
.refresh-actions { display: flex; gap: 9px; }

.btn { display: inline-flex; align-items: center; height: 44px; border-radius: 12px; white-space: nowrap; }
.btn .ico { width: 16px; height: 16px; }
.btn-white { width: 127px; padding-left: 20px; background-color: #fff; color: #374151; letter-spacing: 0.1px; }
.btn-white .ico { margin-right: 12px; }
.btn-warn { background-color: #fffbeb; color: #b9571a; }
.btn-pause { width: 112px; padding-left: 19px; }
.btn-pause .ico { margin-right: 11px; color: #6b7280; }
.btn-plain { background: none; color: #4b5563; padding: 0; }
.btn .btn-chev { width: 20px; height: 20px; margin-left: 2px; }
.btn-gold { background: linear-gradient(135deg, #d4a020, #b88428); color: #352507; font-weight: 500; }

.title-card { height: 182px; margin-top: 12px; padding: 25px 0 0 25px; background-color: #fff; border-radius: 24px; box-shadow: 0 1px 2px rgba(0, 0, 0, 0.02); }
.title-row { display: flex; align-items: center; height: 48px; }
.title-icon { display: flex; align-items: center; justify-content: center; width: 48px; height: 48px; background-color: #0e4633; border-radius: 12px; box-shadow: 0 3px 8px rgba(0, 0, 0, 0.2); color: #fff; }
.title-icon .ico { width: 20px; height: 20px; }
h1 { margin: -2px 0 0 12px; font-size: 24.5px; line-height: 32px; font-weight: 600; color: #33252a; letter-spacing: 0.3px; }
.title-count { margin-left: 12px; padding: 0 11px; height: 28px; line-height: 28px; background: linear-gradient(135deg, #d9a521, #b88428); border-radius: 14px; font-weight: 500; color: #3c2a10; box-shadow: 0 2px 5px rgba(0, 0, 0, 0.1); letter-spacing: 0.4px; }
.title-sub { margin: 4px 0 0 60px; line-height: 20px; color: #6b7280; }
.title-actions { display: flex; align-items: center; margin-top: 16px; }
.btn-export { margin-left: 20px; }
.btn-export .ico:first-child { width: 20px; height: 20px; margin: 0 10px 0 -2px; }
.btn-print { margin-left: 48px; }
.print-icons { display: flex; margin-right: 14px; }
.print-icons .ico:first-child { width: 18px; height: 18px; }
.print-icons .ico:last-child { width: 14px; height: 14px; margin-top: 2px; }
.btn-add { width: 133px; margin-left: 33px; padding-left: 18px; }
.btn-add .ico { margin-right: 13px; color: #8a6a1e; }

.filter-card { display: flex; align-items: center; height: 88px; margin-top: 16px; padding: 0 21px; background-color: #fff; border-radius: 24px; box-shadow: 0 1px 2px rgba(0, 0, 0, 0.02); }
.search-box { display: flex; align-items: center; width: 576px; height: 44px; padding-left: 10px; border: 2px solid #7cc5ab; border-radius: 10px; font-style: italic; color: #9ca3af; }
.search-box .ico { width: 20px; height: 20px; color: #8b95a3; }
.caret { width: 1px; height: 18px; margin: 0 1px 0 13px; background-color: #6b7280; }
.btn-filter { margin-left: 32px; }
.btn-filter .ico:first-child { margin-right: 12px; }
.views { display: flex; width: 322px; height: 46px; margin-left: auto; border: 1px solid #cfd5de; border-radius: 14px; color: #4b5563; }
.view { display: flex; align-items: center; }
.view .ico { width: 18px; height: 18px; }
.view-on { width: 114px; padding-left: 19px; background: linear-gradient(135deg, #d0a620, #b08a28); border-radius: 12px; color: #3a3020; }
.view-on .ico { margin-right: 12px; }
.view-grid { margin-left: 19px; }
.view-grid .ico { margin-right: 12px; }
.view-cards { margin-left: 40px; }
.view-cards .ico { margin-right: 13px; width: 16px; height: 16px; color: #a8afb9; }

/* Table */
.grid-table { margin: 24px 1px 0; background-color: #fff; border-top-left-radius: 24px; border-top-right-radius: 24px; }
.t-row { display: grid; grid-template-columns: 423px 156px 266px 265px; height: 62.85px; border-bottom: 1px solid #e6eaf0; }
.t-row:nth-child(odd) { background-color: #f5f5f5; }
.t-row.t-head { height: 52px; padding-top: 1px; background: none; border-bottom: 2px solid #e6e9f0; font-size: 12px; font-weight: 500; color: #6b7280; letter-spacing: 0.2px; }
.t-cell { display: flex; align-items: center; }
.t-name { padding-left: 10px; font-weight: 500; letter-spacing: 0.12px; }
.t-head .t-name { padding-left: 11px; font-size: 12px; letter-spacing: 0.2px; }
.t-color { padding-left: 11px; }
.t-head .t-color { padding-left: 10px; }
.t-icon { justify-content: center; color: #1f5c48; }
.t-head .t-icon { color: #6b7280; }
.t-icon .ico { width: 20px; height: 20px; stroke-width: 1.2; }
.t-icon-soft { color: #7fa598; }
.t-actions { justify-content: flex-end; padding-right: 10px; box-shadow: -5px 0 6px -4px rgba(0, 0, 0, 0.06); }
.t-head .t-actions { margin-top: -1px; padding-top: 1px; background-color: #f1f3f9; box-shadow: none; border-top-right-radius: 24px; }

.toggle { display: block; position: relative; width: 38px; height: 24px; margin: -6px 10px 0 0; overflow: hidden; background: linear-gradient(90deg, #d5dae2, #c7d0dc); border-radius: 12px 0 0 12px; box-shadow: 0 3px 5px rgba(100, 116, 139, 0.12); flex-shrink: 0; }
.toggle i { position: absolute; top: 1px; left: 1px; width: 22px; height: 22px; background-color: #fff; border-radius: 50%; box-shadow: 0 1px 3px rgba(0, 0, 0, 0.3); }
.toggle-head { width: 44px; margin: -6px 4px 0 0; border-radius: 12px; }

.chip { display: flex; align-items: center; justify-content: center; width: 32px; height: 32px; margin-right: 12px; background-color: rgba(16, 185, 129, 0.13); border-radius: 12px; color: #24664f; }
.chip .ico { width: 20px; height: 20px; stroke-width: 1.2; }
.chip-soft { color: #7fa598; }
.chip-indigo { background-color: rgba(99, 102, 241, 0.13); }
.chip-pink { background-color: rgba(236, 72, 153, 0.13); }

.dot { width: 24px; height: 24px; border: 1px solid #14513e; border-radius: 50%; }
.dot-green { background-color: #10b981; }
.dot-indigo { background-color: #6366f1; }
.dot-pink { background-color: #ec4899; }

.btn-archive { width: 119px; padding-left: 19px; font-weight: 400; letter-spacing: 0.05px; }
.btn-archive .ico { width: 19px; height: 19px; margin-right: 4px; stroke-width: 1.3; }

/* Footer */
.footer { position: relative; display: flex; flex-direction: column; align-items: center; height: 60px; padding-top: 9px; background: linear-gradient(90deg, #115a45, #1a6a50); border-top: 1px solid #23705a; color: #e2ece8; flex-shrink: 0; }
.foot-line { display: flex; align-items: center; font-size: 12px; line-height: 17px; white-space: pre; color: #d8e6e1; }
.foot-line b { font-weight: 600; color: #fff; }
.foot-line .ico { width: 11px; height: 12px; color: #d4a017; margin-right: 8px; }
.foot-links { display: flex; align-items: center; margin: 4px 8px 0 0; font-size: 11px; line-height: 17px; }
.foot-links i { margin: 0 20px 0 18px; font-style: normal; color: #a9c3ba; }
.foot-links .foot-dot-first { margin-left: 10px; }
.foot-links a { color: #d4a017; }
.foot-links a.foot-ver { font-family: "Liberation Mono", monospace; font-size: 11px; letter-spacing: 0.5px; }

/* Tab and annotations */
.side-tab { position: absolute; top: 540px; left: 1396px; display: flex; align-items: center; width: 44px; height: 68px; padding-left: 14px; background-color: rgba(77, 122, 108, 0.75); border-radius: 0 0 0 14px; color: #5c8375; }
.side-tab .ico { width: 16px; height: 16px; }
.mark { position: absolute; border: 4px solid #f4581c; border-radius: 10px; background-color: rgba(244, 88, 28, 0.14); box-shadow: 0 0 6px rgba(244, 88, 28, 0.2); }
.mark-1 { top: 188px; left: 320px; width: 531px; height: 59px; }
.mark-2 { top: 278px; left: 632px; width: 143px; height: 53px; border-width: 5px; background: none; border-radius: 12px; }
.mark-4 { top: 534px; left: 1280px; width: 132px; height: 53px; border-radius: 12px; }
.pin { position: absolute; display: flex; align-items: center; justify-content: center; width: 50px; height: 50px; background-color: #f4581c; border: 3px solid #fff; border-radius: 50%; font-family: "Liberation Sans", sans-serif; font-size: 32px; font-weight: 700; color: #fff; }
.pin-1 { top: 163px; left: 295px; }
.pin-2 { top: 254px; left: 748px; }
.pin-4 { top: 510px; left: 1387px; }
```
